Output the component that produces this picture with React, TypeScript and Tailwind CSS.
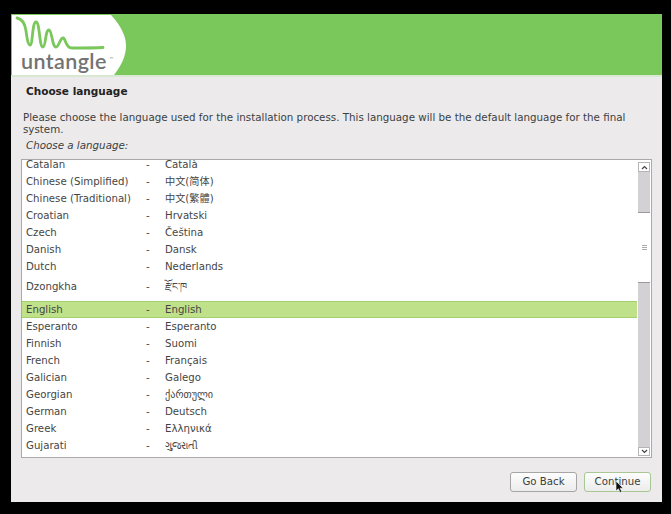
const sans = "font-['DejaVu_Sans','Noto_Sans_CJK_SC',sans-serif]"

const rows = [
  { name: 'Chinese (Simplified)', native: '中文(简体)' },
  { name: 'Chinese (Traditional)', native: '中文(繁體)' },
  { name: 'Croatian', native: 'Hrvatski' },
  { name: 'Czech', native: 'Čeština' },
  { name: 'Danish', native: 'Dansk' },
  { name: 'Dutch', native: 'Nederlands' },
]

const rowsAfter = [
  { name: 'Esperanto', native: 'Esperanto' },
  { name: 'Finnish', native: 'Suomi' },
  { name: 'French', native: 'Français' },
  { name: 'Galician', native: 'Galego' },
  { name: 'Georgian', native: 'ქართული' },
  { name: 'German', native: 'Deutsch' },
  { name: 'Greek', native: 'Ελληνικά' },
  { name: 'Gujarati', native: 'ગુજરાતી' },
]

function Row({ name, native, className = 'h-[17px]' }: { name: string; native: string; className?: string }) {
  return (
    <div className={`flex items-center pl-[4px] ${className}`}>
      <span className="w-[120px] shrink-0 whitespace-nowrap">{name}</span>
      <span className="w-[19px] shrink-0">-</span>
      <span className="whitespace-nowrap">{native}</span>
    </div>
  )
}

function Logo() {
  return (
    <div className="relative h-full w-[115px] shrink-0">
      <svg width="115" height="61" viewBox="0 0 115 61" className="block">
        <path d="M1 1H100C110 12 115 22 115 32C115 42 110 52 103 61H1Z" fill="#ffffff" />
        <path
          d="M6 4C12 5 14 10 15 17C16 24 17 31 19 31C22 31 21 8 25 8C29 8 28 33 32 33C35 33 34 16 38 16C41 16 41 33 45 33C48 33 49 24 52 24C55 24 54 34 61 34C72 34 84 34 92 33.5"
          fill="none"
          stroke="#7ac75c"
          strokeWidth="2.8"
          strokeLinecap="round"
        />
      </svg>
      <span className="absolute left-[10px] top-[34px] font-['Lato',sans-serif] text-[21.5px] leading-[26px] tracking-[0.4px] font-semibold text-[#737373]">
        untangle
      </span>
      <span className="absolute left-[98px] top-[43px] text-[5px] leading-none text-[#737373]">™</span>
    </div>
  )
}

export default function App() {
  return (
    <div className={`flex h-[514px] w-[671px] overflow-hidden bg-black pl-[11px] pt-[14px] pb-[12px] pr-[9px] ${sans}`}>
      <div className="flex w-full flex-col bg-[#edeaec] text-[10.2px] text-[#3a3f41]">
        <div className="flex h-[61px] shrink-0 bg-[#7ac75c]">
          <Logo />
        </div>
        <div className="h-[2px] bg-[#d9e8d2]" />

        <div className="pl-[15px] pt-[7px] text-[10.5px] leading-[14px] font-bold text-[#222]">Choose language</div>

        <p className="mt-[13px] pl-[12px] pr-[24px] text-[10.3px] leading-[12px]">
          Please choose the language used for the installation process. This language will be the default language for the final system.
        </p>
        <div className="mt-[3px] pl-[15px] text-[10.3px] leading-[14px] italic">Choose a language:</div>

        <div className="mx-[10px] mt-[7px] flex h-[299px] border border-[#a9a9a9] bg-white">
          <div className="min-w-0 flex-1 overflow-hidden pr-[1px] text-[#454545]">
            <div className="mt-[-4px]">
              <Row name="Catalan" native="Català" />
              {rows.map((r) => (
                <Row key={r.name} name={r.name} native={r.native} />
              ))}
              <Row name="Dzongkha" native="རྫོང་ཁ" className="h-[23px]" />
              <Row
                name="English"
                native="English"
                className="mt-[3px] h-[17px] border-y border-[#a4cf6f] bg-[#bfe18a]"
              />
              {rowsAfter.map((r) => (
                <Row key={r.name} name={r.name} native={r.native} />
              ))}
            </div>
          </div>
          <div className="flex w-[13px] shrink-0 pb-[1px] pr-[1px] pt-[2px]">
            <div className="flex w-full flex-col bg-[#d3d1d3]">
              <div className="flex h-[10px] items-center justify-center border border-[#b5b5b5] bg-white">
                <svg width="7" height="5" viewBox="0 0 7 5"><path d="M1 4L3.5 1.5L6 4" fill="none" stroke="#444" strokeWidth="1.2" /></svg>
              </div>
              <div className="mt-[40px] flex h-[71px] flex-col items-center justify-center gap-[1px] border-y border-[#9a9a9a] bg-white">
                <div className="h-px w-[5px] bg-[#aaa]" />
                <div className="h-px w-[5px] bg-[#aaa]" />
                <div className="h-px w-[5px] bg-[#aaa]" />
              </div>
              <div className="flex-1" />
              <div className="flex h-[9px] items-center justify-center border border-[#b5b5b5] bg-white">
                <svg width="7" height="5" viewBox="0 0 7 5"><path d="M1 1L3.5 3.5L6 1" fill="none" stroke="#444" strokeWidth="1.2" /></svg>
              </div>
            </div>
          </div>
        </div>

        <div className="mt-[14px] flex justify-end gap-[7px] pr-[11px]">
          <button className="h-[20px] w-[67px] rounded-[3px] border border-[#a5a5a5] bg-gradient-to-b from-[#fdfdfd] to-[#ececec] text-[10.2px] leading-none text-[#3a3f41]">
            Go Back
          </button>
          <button className="relative h-[20px] w-[67px] rounded-[3px] border border-[#a9c795] bg-gradient-to-b from-[#fdfdfd] to-[#ececec] text-[10.2px] leading-none text-[#3a3f41]">
            Continue
            <svg width="9" height="14" viewBox="0 0 9 14" className="absolute left-[30px] top-[7px]">
              <path d="M1 1V11L3.4 8.8L5 12.5L6.8 11.8L5.2 8.2H8.2Z" fill="#111" stroke="#fff" strokeWidth="0.6" />
            </svg>
          </button>
        </div>
      </div>
    </div>
  )
}
